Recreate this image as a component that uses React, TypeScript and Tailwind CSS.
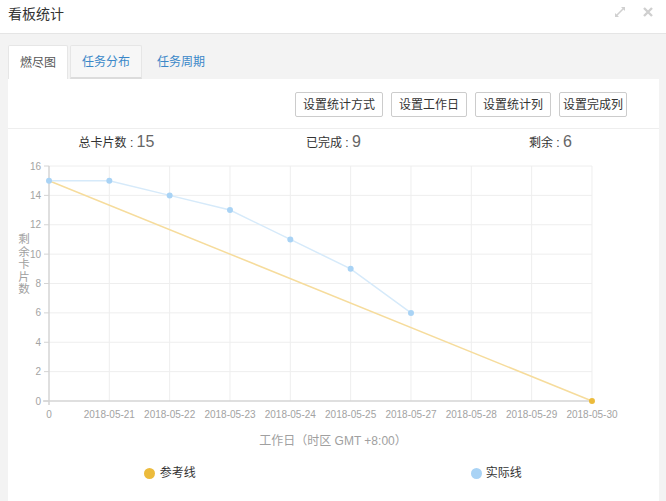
import { useState } from 'react'

const font = { fontFamily: '"Liberation Sans", "Noto Sans CJK SC", sans-serif' }

const dates = [
  '0',
  '2018-05-21',
  '2018-05-22',
  '2018-05-23',
  '2018-05-24',
  '2018-05-25',
  '2018-05-27',
  '2018-05-28',
  '2018-05-29',
  '2018-05-30',
]
const actual = [15, 15, 14, 13, 11, 9, 6]

// chart geometry (svg coords, panel-relative)
const X0 = 41
const STEP = 60.33
const Y0 = 246
const UNIT = 14.6875
const px = (i: number) => X0 + i * STEP
const py = (v: number) => Y0 - v * UNIT

function BurndownChart() {
  const right = px(9)
  const top = py(16)
  return (
    <svg width={651} height={297} className="block">
      {/* grid */}
      {[2, 4, 6, 8, 10, 12, 14, 16].map((v) => (
        <line key={`h${v}`} x1={X0} x2={right} y1={py(v)} y2={py(v)} stroke="#eeeeee" />
      ))}
      {dates.map((_, i) =>
        i === 0 ? null : (
          <line key={`v${i}`} x1={px(i)} x2={px(i)} y1={top} y2={Y0} stroke="#eeeeee" />
        ),
      )}
      {/* axes */}
      <line x1={X0} x2={X0} y1={top} y2={Y0 + 4} stroke="#d4d4d4" strokeWidth={1.5} />
      <line x1={X0 - 6} x2={right} y1={Y0} y2={Y0} stroke="#d4d4d4" strokeWidth={1.5} />
      {[0, 2, 4, 6, 8, 10, 12, 14, 16].map((v) => (
        <g key={`yl${v}`}>
          <line x1={X0 - 5} x2={X0} y1={py(v)} y2={py(v)} stroke="#d4d4d4" />
          <text
            x={X0 - 8}
            y={py(v)}
            textAnchor="end"
            dominantBaseline="central"
            fontSize={10}
            fill="#a3a3a3"
            style={font}
          >
            {v}
          </text>
        </g>
      ))}
      {dates.map((d, i) => (
        <text
          key={`xl${i}`}
          x={px(i)}
          y={Y0 + 13}
          textAnchor="middle"
          dominantBaseline="central"
          fontSize={10}
          fill="#a3a3a3"
          style={font}
        >
          {d}
        </text>
      ))}
      {/* axis titles, stacked one char per row */}
      {'剩余卡片数'.split('').map((c, i) => (
        <text
          key={`yt${i}`}
          x={16}
          y={84 + i * 12.5}
          textAnchor="middle"
          dominantBaseline="central"
          fontSize={11.5}
          fill="#a0a0a0"
          style={font}
        >
          {c}
        </text>
      ))}
      <text
        x={325}
        y={286}
        textAnchor="middle"
        dominantBaseline="central"
        fontSize={12}
        fill="#a0a0a0"
        style={font}
      >
        工作日（时区 GMT +8:00）
      </text>
      {/* reference line */}
      <line x1={px(0)} y1={py(15)} x2={px(9)} y2={py(0)} stroke="#f6dc9c" strokeWidth={1.5} />
      <circle cx={px(9)} cy={py(0)} r={3} fill="#ecbb3c" />
      {/* actual line */}
      <polyline
        points={actual.map((v, i) => `${px(i)},${py(v)}`).join(' ')}
        fill="none"
        stroke="#d6eafa"
        strokeWidth={1.5}
      />
      {actual.map((v, i) => (
        <circle key={`p${i}`} cx={px(i)} cy={py(v)} r={3} fill="#a9d3f5" />
      ))}
    </svg>
  )
}

const tabs = ['燃尽图', '任务分布', '任务周期']
const buttons = [
  { label: '设置统计方式', w: 'w-[88px]' },
  { label: '设置工作日', w: 'w-[76px]' },
  { label: '设置统计列', w: 'w-[76px]' },
  { label: '设置完成列', w: 'w-[68px]' },
]

export default function App() {
  const [active] = useState(0)

  return (
    <div className="w-[666px] h-[501px] overflow-hidden bg-white text-[#333]" style={font}>
      {/* header */}
      <div className="h-[34px] flex items-start justify-between pl-2 pr-[13px] pt-[5px] border-b border-[#e5e5e5] bg-white">
        <span className="text-[14px] leading-[18px] text-[#333]">看板统计</span>
        <div className="flex items-center gap-[17px] pt-[1px]">
          <svg width="12" height="12" viewBox="0 0 12 12">
            <path d="M7 1h4v4z M5 11H1V7z" fill="#d0d0d0" />
            <path d="M10 2 2 10" stroke="#d0d0d0" strokeWidth="1.6" />
          </svg>
          <svg width="10" height="10" viewBox="0 0 10 10">
            <path d="M1 1 9 9 M9 1 1 9" stroke="#cfcfcf" strokeWidth="2.4" />
          </svg>
        </div>
      </div>

      {/* body */}
      <div className="bg-[#f3f3f3] pl-2 pr-[7px] pt-[11px] h-[467px] flex flex-col">
        <div className="flex h-[34px] gap-[2px] items-end">
          {tabs.map((t, i) => (
            <div
              key={t}
              className={
                i === active
                  ? 'h-[34px] px-[11px] flex items-center bg-white border border-b-0 border-[#e6e6e6] text-[12px] text-[#555] rounded-t-[2px]'
                  : i === 1
                    ? 'h-[34px] px-[11px] flex items-center bg-[#f7f7f7] border border-[#e6e6e6] border-b-[#dcdcdc] border-b-2 text-[12px] text-[#3a87c8] rounded-t-[2px]'
                    : 'h-[34px] px-[13px] flex items-center text-[12px] text-[#3a87c8]'
              }
            >
              {t}
            </div>
          ))}
        </div>

        {/* panel */}
        <div className="flex-1 bg-white flex flex-col">
          <div className="flex justify-end gap-2 pt-[13px] pr-[32px]">
            {buttons.map((b) => (
              <button
                key={b.label}
                type="button"
                className={`${b.w} h-[25px] flex items-center justify-center border border-[#cccccc] rounded-[2px] bg-white text-[12px] text-[#333]`}
              >
                {b.label}
              </button>
            ))}
          </div>
          <div className="mt-[11px] border-t border-[#eeeeee]" />
          <div className="grid grid-cols-3 h-[26px] items-center">
            <div className="text-center text-[12px] text-[#333]">
              总卡片数 : <span className="text-[16px] text-[#666]">15</span>
            </div>
            <div className="text-center text-[12px] text-[#333]">
              已完成 : <span className="text-[16px] text-[#666]">9</span>
            </div>
            <div className="text-center text-[12px] text-[#333]">
              剩余 : <span className="text-[16px] text-[#666]">6</span>
            </div>
          </div>
          <BurndownChart />
          <div className="grid grid-cols-2 h-[42px] items-center">
            <div className="flex items-center justify-center gap-[5px] pr-[2px]">
              <span className="w-[11px] h-[11px] rounded-full bg-[#ecbb3c]" />
              <span className="text-[12px] text-[#333]">参考线</span>
            </div>
            <div className="flex items-center justify-center gap-[4px]">
              <span className="w-[11px] h-[11px] rounded-full bg-[#a9d3f5]" />
              <span className="text-[12px] text-[#333]">实际线</span>
            </div>
          </div>
        </div>
      </div>
    </div>
  )
}
